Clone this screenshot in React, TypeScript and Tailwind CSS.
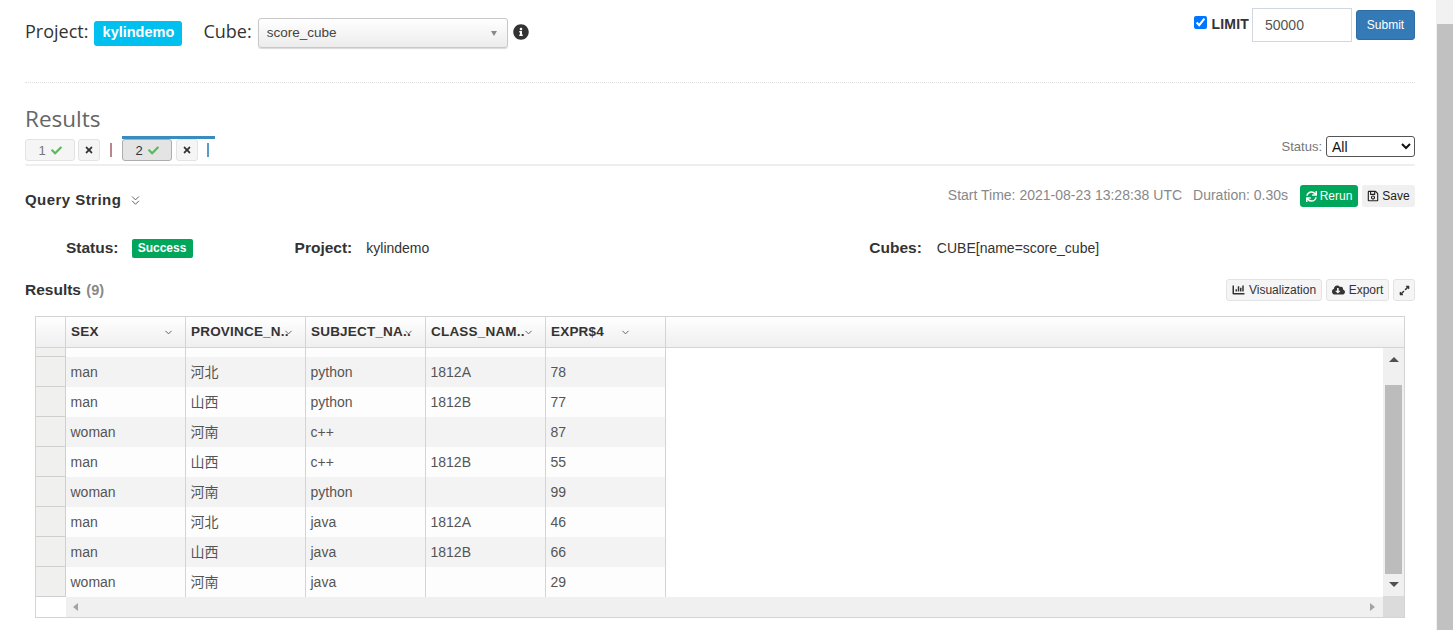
import { FaChartBar, FaCheck, FaCloudDownloadAlt, FaExpandAlt, FaInfoCircle, FaRegSave, FaSync, FaTimes } from 'react-icons/fa'
import { ChevronDown, ChevronsDown } from 'lucide-react'

const rows = [
  ['man', '河北', 'python', '1812A', '78'],
  ['man', '山西', 'python', '1812B', '77'],
  ['woman', '河南', 'c++', '', '87'],
  ['man', '山西', 'c++', '1812B', '55'],
  ['woman', '河南', 'python', '', '99'],
  ['man', '河北', 'java', '1812A', '46'],
  ['man', '山西', 'java', '1812B', '66'],
  ['woman', '河南', 'java', '', '29'],
]

const columns = [
  { name: 'SEX', arrow: 'right-[11px]' },
  { name: 'PROVINCE_N..', arrow: 'right-[11px]' },
  { name: 'SUBJECT_NA..', arrow: 'right-[11px]' },
  { name: 'CLASS_NAM..', arrow: 'right-[11px]' },
  { name: 'EXPR$4', arrow: 'right-[34px]' },
]
const arial = "font-['Liberation_Sans','Noto_Sans_CJK_SC',sans-serif]"
const openSans = "font-['Open_Sans',sans-serif]"

function ResultTab({ n, active }: { n: number; active?: boolean }) {
  return (
    <div className={'border-t-[3px] pr-[6px] ' + (active ? 'border-[#3a8cbf]' : 'border-transparent')}>
      <div className="flex items-center">
        <div className={'w-[50px] h-[22px] rounded-[3px] border flex items-center justify-center gap-[5px] text-[13px] leading-none ' + (active ? 'bg-[#e4e4e4] border-[#adadad] text-[#333]' : 'bg-[#f5f5f5] border-[#e3e3e3] text-[#777]')}>
          {n}
          <FaCheck className="w-[11px] h-[11px] text-[#5cb85c]" />
        </div>
        <div className={'w-[22px] h-[22px] rounded-[3px] border border-[#e3e3e3] bg-[#f5f5f5] flex items-center justify-center text-[#333] ' + (active ? 'ml-[4px]' : 'ml-[3px]')}>
          <FaTimes className="w-[10px] h-[10px]" />
        </div>
        <div className={'h-[14px] w-[2px] ' + (active ? 'ml-[9px] bg-[#5a9cc8]' : 'ml-[10px] bg-[#b9858f]')} />
      </div>
    </div>
  )
}

function ToolButton({ icon, label, width }: { icon: React.ReactNode; label?: string; width: string }) {
  return (
    <div className={'h-[22px] rounded-[3px] border border-[#e3e3e3] bg-[#f5f5f5] flex items-center justify-center gap-[4px] text-[12px] text-[#333] ' + width}>
      {icon}
      {label}
    </div>
  )
}

export default function App() {
  return (
    <div className={'flex h-[630px] w-[1453px] overflow-hidden bg-white ' + arial}>
      <div className="w-[1436px] pl-[25px] pr-[21px]">
        {/* query bar */}
        <div className="h-[83px] border-b border-dotted border-[#dddddd] flex items-start justify-between">
          <div className={'flex items-center pt-[18px] text-[18px] text-[#333] ' + openSans}>
            <span className="leading-[28px] -mt-[4px]">Project:</span>
            <span className={'ml-[6px] h-[25px] w-[88px] rounded-[3px] bg-[#00c0ef] text-white text-[14.5px] font-bold flex items-center justify-center ' + arial}>kylindemo</span>
            <span className="ml-[21px] leading-[28px] -mt-[4px]">Cube:</span>
            <div className={'ml-[6px] w-[250px] h-[30px] rounded-[3px] border border-[#c8c8c8] bg-gradient-to-b from-white to-[#ececec] shadow-[0_1px_1px_rgba(0,0,0,0.15)] flex items-center justify-between pl-[8px] pr-[10px] text-[13.5px] text-[#444] ' + arial}>
              <span className="pt-[1px]">score_cube</span>
              <span className="w-0 h-0 border-x-[3px] border-t-[5px] border-x-transparent border-t-[#888]" />
            </div>
            <FaInfoCircle className="ml-[5px] -mt-[3px] w-[16px] h-[16px] text-[#333]" />
          </div>
          <div className="flex items-start pt-[8px]">
            <input type="checkbox" defaultChecked className="mt-[8px] w-[13px] h-[13px] accent-[#0075ff]" />
            <span className="ml-[4px] mt-[8px] text-[14px] leading-[16px] font-bold text-[#333] tracking-[0.2px]">LIMIT</span>
            <div className="ml-[3px] w-[100px] h-[34px] border border-[#d2d6de] px-[12px] flex items-center text-[14px] text-[#555]">50000</div>
            <div className="ml-[4px] w-[59px] h-[30px] mt-[2px] rounded-[3px] border border-[#2e6da4] bg-[#337ab7] text-white text-[12px] flex items-center justify-center">Submit</div>
          </div>
        </div>

        {/* results header */}
        <div className={'mt-[20px] text-[22.5px] leading-[32px] text-[#666] ' + openSans}>Results</div>
        <div className="h-[31px] flex items-start justify-between border-b-2 border-[#eeeeee] rounded-b-[2px]">
          <div className="flex items-start gap-[4px] pt-[1px]">
            <ResultTab n={1} />
            <ResultTab n={2} active />
          </div>
          <div className="flex items-center pt-[1px] text-[13px] text-[#777]">
            Status:
            <select className="ml-[4px] w-[89px] h-[21px] rounded-[3px] border border-[#555] bg-white text-[14px] text-[#111] pl-[1px]">
              <option>All</option>
            </select>
          </div>
        </div>

        {/* query info */}
        <div className="mt-[18px] h-[24px] flex items-center justify-between">
          <div className="flex items-center pt-[8px] text-[15px] font-bold text-[#333] tracking-[0.45px]">
            Query String
            <ChevronsDown className="ml-[7px] w-[15px] h-[15px] text-[#555]" strokeWidth={1.5} />
          </div>
          <div className="flex items-center text-[14px] text-[#888]">
            <span className="-mt-[2px]">Start Time: 2021-08-23 13:28:38 UTC</span>
            <span className="ml-[11px] -mt-[2px]">Duration: 0.30s</span>
            <div className="ml-[12px] w-[58px] h-[22px] rounded-[3px] bg-[#00a65a] text-white text-[12px] flex items-center justify-center gap-[3px]">
              <FaSync className="w-[11px] h-[11px]" />
              Rerun
            </div>
            <div className="ml-[4px] w-[53px] h-[22px] rounded-[3px] bg-[#f0f0f0] text-[#222] text-[12px] flex items-center justify-center gap-[3px]">
              <FaRegSave className="w-[12px] h-[12px]" />
              Save
            </div>
          </div>
        </div>

        <div className="mt-[28px] h-[24px] flex items-center text-[14px] text-[#333]">
          <span className="ml-[41px] text-[15.5px] font-bold">Status:</span>
          <span className="ml-[13px] w-[61px] h-[19px] rounded-[2px] bg-[#00a65a] text-white text-[12px] font-bold flex items-center justify-center">Success</span>
          <span className="ml-[102px] text-[15.5px] font-bold">Project:</span>
          <span className="ml-[14px]">kylindemo</span>
          <span className="ml-[440px] text-[15.5px] font-bold">Cubes:</span>
          <span className="ml-[15px]">CUBE[name=score_cube]</span>
        </div>

        <div className="mt-[18px] h-[24px] flex items-center justify-between">
          <div className="text-[15.5px] font-bold text-[#333]">
            Results <span className="ml-[1px] text-[14.5px] text-[#888]">(9)</span>
          </div>
          <div className="flex items-center gap-[4px]">
            <ToolButton width="w-[96px]" icon={<FaChartBar className="w-[13px] h-[12px]" />} label="Visualization" />
            <ToolButton width="w-[63px]" icon={<FaCloudDownloadAlt className="w-[13px] h-[12px]" />} label="Export" />
            <ToolButton width="w-[22px]" icon={<FaExpandAlt className="w-[11px] h-[11px]" />} />
          </div>
        </div>

        {/* grid */}
        <div className="mt-[14px] ml-[10px] w-[1370px] h-[302px] border border-[#d4d4d4] flex flex-col text-[13px] text-[#555]">
          <div className="h-[31px] flex shrink-0 border-b border-[#d4d4d4] bg-gradient-to-b from-white to-[#efefef]">
            <div className="w-[30px] border-r border-[#d4d4d4]" />
            {columns.map(c => (
              <div key={c.name} className="relative w-[120px] border-r border-[#d4d4d4] pl-[5px] flex items-center font-bold text-[13.5px] text-[#333] tracking-[0.2px]">
                <span className="whitespace-nowrap">{c.name}</span>
                <ChevronDown className={'absolute top-[10px] w-[11px] h-[11px] text-[#555] ' + c.arrow} />
              </div>
            ))}
          </div>
          <div className="flex flex-1 min-h-0">
            <div className="flex-1 min-w-0 flex flex-col">
              <div className="h-[9px] flex shrink-0">
                <div className="w-[30px] bg-[#f0f0ee] border-r border-b border-[#cfcfcf]" />
                {columns.map(c => (
                  <div key={c.name} className="w-[120px] bg-[#fdfdfd] border-r border-[#d4d4d4]" />
                ))}
              </div>
              {rows.map((r, i) => (
                <div key={i} className="h-[30px] flex shrink-0">
                  <div className="w-[30px] bg-[#f0f0ee] border-r border-b border-[#cfcfcf]" />
                  {r.map((v, j) => (
                    <div key={j} className={'w-[120px] border-r border-[#d4d4d4] pl-[4.5px] flex items-center text-[14px] ' + (i % 2 === 0 ? 'bg-[#f3f3f3]' : 'bg-[#fdfdfd]')}>{v}</div>
                  ))}
                </div>
              ))}
              <div className="h-[20px] flex shrink-0">
                <div className="w-[30px] bg-white" />
                <div className="flex-1 bg-[#f0f0f0] flex items-center justify-between pl-[7px] pr-[8px]">
                  <span className="w-0 h-0 border-y-[4.5px] border-r-[5px] border-y-transparent border-r-[#a3a3a3]" />
                  <span className="w-0 h-0 border-y-[4.5px] border-l-[5px] border-y-transparent border-l-[#a3a3a3]" />
                </div>
              </div>
            </div>
            <div className="w-[21px] shrink-0 flex flex-col bg-[#f0f0f0]">
              <div className="h-[37px] flex items-start justify-center pt-[9px]">
                <span className="w-0 h-0 border-x-[5px] border-b-[5px] border-x-transparent border-b-[#505050]" />
              </div>
              <div className="h-[189px] w-[17px] ml-[2px] bg-[#bcbcbc]" />
              <div className="flex-1 flex items-start justify-center pt-[8px]">
                <span className="w-0 h-0 border-x-[5px] border-t-[5px] border-x-transparent border-t-[#505050]" />
              </div>
              <div className="h-[21px] bg-[#dbdbdb]" />
            </div>
          </div>
        </div>
      </div>

      {/* page scrollbar */}
      <div className="w-[17px] shrink-0 flex flex-col bg-[#f1f1f1]">
        <div className="h-[24px]" />
        <div className="flex-1 ml-[1px] bg-[#c1c1c1]" />
      </div>
    </div>
  )
}
